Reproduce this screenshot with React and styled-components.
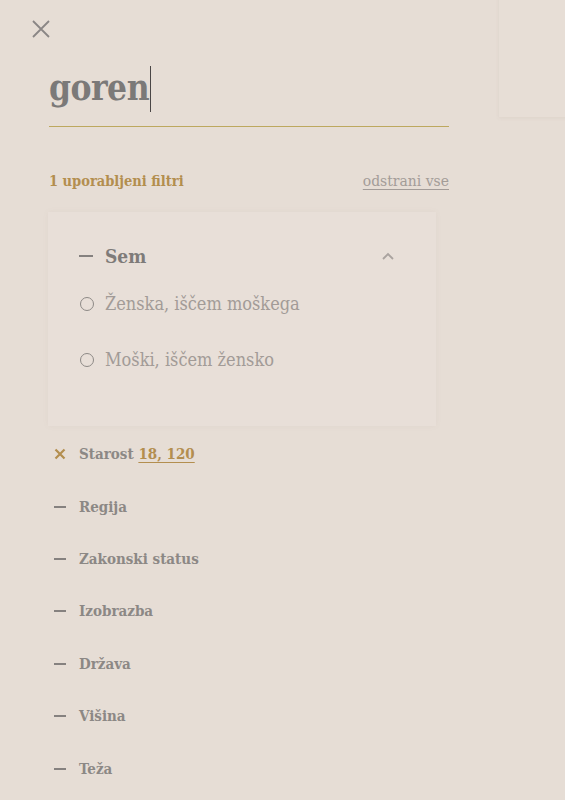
import React from "react";
import styled, { createGlobalStyle } from "styled-components";

const Global = createGlobalStyle`
  html, body { margin: 0; padding: 0; background: #e6ddd5; }
  body {
    font-family: "DejaVu Serif", "Liberation Serif", serif;
    font-stretch: semi-condensed;
    width: 565px;
    height: 800px;
    overflow: hidden;
  }
  * { box-sizing: border-box; }
`;

const Page = styled.div`
  position: relative;
  width: 565px;
  height: 800px;
  background: #e6ddd5;
  overflow: hidden;
`;

const SidePanel = styled.div`
  position: absolute;
  left: 499px;
  top: -10px;
  width: 100px;
  height: 127px;
  background: #e7ded6;
  box-shadow: 0 1px 4px rgba(120, 100, 80, 0.08);
`;

const CloseBtn = styled.button`
  position: absolute;
  left: 30px;
  top: 18px;
  width: 22px;
  height: 22px;
  padding: 0;
  border: 0;
  background: none;
  display: flex;
  align-items: center;
  justify-content: center;
`;

const Content = styled.div`
  width: 400px;
  margin-left: 49px;
  padding-top: 62px;
  display: flex;
  flex-direction: column;
`;

const SearchField = styled.div`
  height: 65px;
  border-bottom: 1px solid #bda85f;
  display: flex;
  align-items: flex-start;
`;

const SearchText = styled.span`
  font-size: 35px;
  font-weight: 700;
  color: #7b7978;
  line-height: 52px;
  letter-spacing: -0.5px;
`;

const Caret = styled.span`
  display: inline-block;
  width: 1px;
  height: 46px;
  background: #4a4646;
  margin-top: 4px;
  margin-left: 1px;
`;

const FilterBar = styled.div`
  margin-top: 45px;
  display: flex;
  justify-content: space-between;
  align-items: baseline;
`;

const AppliedCount = styled.span`
  font-size: 14.5px;
  font-weight: 700;
  color: #b38e4f;
`;

const ClearAll = styled.a`
  font-size: 15.5px;
  color: #a39c98;
  text-decoration: underline;
  text-underline-offset: 3px;
`;

const Panel = styled.div`
  margin-top: 22px;
  margin-left: -1px;
  width: 388px;
  height: 214px;
  background: #e8dfd8;
  box-shadow: 0 0 6px rgba(140, 120, 100, 0.06);
  padding: 30px 31px 0 31px;
`;

const PanelHead = styled.div`
  display: flex;
  align-items: center;
  justify-content: space-between;
  height: 28px;
`;

const PanelTitle = styled.div`
  display: flex;
  align-items: center;
  gap: 12px;
  font-size: 19px;
  font-weight: 700;
  color: #7e7b79;
`;

const Dash = styled.span`
  display: inline-block;
  width: ${(p) => p.$w || 14}px;
  height: 2px;
  background: #85817f;
`;

const Options = styled.div`
  margin-top: 20px;
  display: flex;
  flex-direction: column;
  gap: 29px;
`;

const Option = styled.label`
  display: flex;
  align-items: center;
  gap: 11px;
  font-size: 18px;
  color: #a29b97;
  height: 27px;
`;

const Radio = styled.span`
  width: 14px;
  height: 14px;
  border-radius: 50%;
  border: 1.2px solid #8d8986;
  margin-left: 1px;
`;

const List = styled.div`
  margin-top: 2px;
  display: flex;
  flex-direction: column;
`;

const Row = styled.div`
  height: 52.4px;
  display: flex;
  align-items: center;
  gap: 13px;
  padding-left: 5px;
  font-size: 15px;
  font-weight: 700;
  color: #8c8885;
`;

const IconBox = styled.span`
  width: 12px;
  display: flex;
  align-items: center;
  justify-content: center;
`;

const Value = styled.span`
  color: #b38e4f;
  text-decoration: underline;
  text-underline-offset: 3px;
`;

const items = ["Regija", "Zakonski status", "Izobrazba", "Država", "Višina", "Teža"];

export default function App() {
  return (
    <Page>
      <Global />
      <SidePanel />
      <CloseBtn aria-label="close">
        <svg width="20" height="20" viewBox="0 0 20 20">
          <path d="M2 2 L18 18 M18 2 L2 18" stroke="#8a8685" strokeWidth="1.8" fill="none" />
        </svg>
      </CloseBtn>
      <Content>
        <SearchField>
          <SearchText>goren</SearchText>
          <Caret />
        </SearchField>
        <FilterBar>
          <AppliedCount>1 uporabljeni filtri</AppliedCount>
          <ClearAll>odstrani vse</ClearAll>
        </FilterBar>
        <Panel>
          <PanelHead>
            <PanelTitle>
              <Dash $w={14} />
              Sem
            </PanelTitle>
            <svg width="14" height="10" viewBox="0 0 14 10" style={{ marginRight: 10 }}>
              <path d="M2 8 L7 3 L12 8" stroke="#aaa39f" strokeWidth="1.8" fill="none" />
            </svg>
          </PanelHead>
          <Options>
            <Option>
              <Radio />
              Ženska, iščem moškega
            </Option>
            <Option>
              <Radio />
              Moški, iščem žensko
            </Option>
          </Options>
        </Panel>
        <List>
          <Row>
            <IconBox>
              <svg width="12" height="12" viewBox="0 0 12 12">
                <path d="M1.5 1.5 L10.5 10.5 M10.5 1.5 L1.5 10.5" stroke="#b38e4f" strokeWidth="2.2" fill="none" />
              </svg>
            </IconBox>
            <span>
              Starost <Value>18, 120</Value>
            </span>
          </Row>
          {items.map((it) => (
            <Row key={it}>
              <IconBox>
                <Dash $w={13} />
              </IconBox>
              {it}
            </Row>
          ))}
        </List>
      </Content>
    </Page>
  );
}
